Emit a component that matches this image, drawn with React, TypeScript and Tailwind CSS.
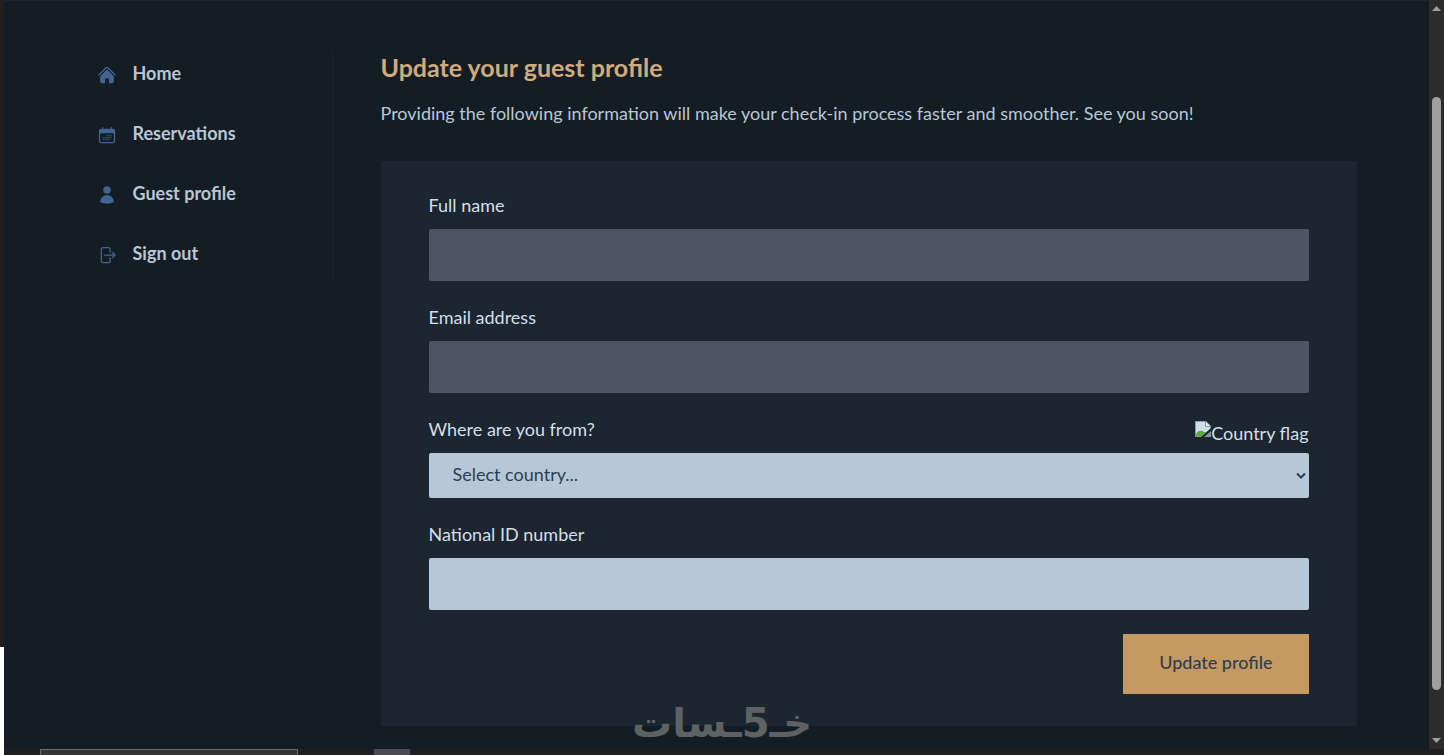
import { HiCalendarDays, HiHome, HiUser } from "react-icons/hi2";

interface NavLink {
  icon: React.ReactNode;
  title: string;
  href: string;
}

const navLinks: NavLink[] = [
  {
    icon: <HiHome size={20} />,
    title: "Home",
    href: "#home",
  },
  {
    icon: <HiCalendarDays size={20} />,
    title: "Reservations",
    href: "#reservations",
  },
  {
    icon: <HiUser size={20} />,
    title: "Guest profile",
    href: "#profile",
  },
];

function SignOutIcon() {
  return (
    <svg
      width="20"
      height="20"
      viewBox="0 0 24 24"
      fill="none"
      stroke="currentColor"
      strokeWidth="1.5"
      strokeLinecap="round"
      strokeLinejoin="round"
    >
      <path d="M15.75 9V5.25A2.25 2.25 0 0 0 13.5 3h-6a2.25 2.25 0 0 0-2.25 2.25v13.5A2.25 2.25 0 0 0 7.5 21h6a2.25 2.25 0 0 0 2.25-2.25V15m3 0 3-3m0 0-3-3m3 3H9" />
    </svg>
  );
}

function SideNavigation() {
  return (
    <nav className="w-64 shrink-0 self-start border-r border-[#1b2631]">
      <ul className="flex flex-col gap-2 text-lg font-bold text-[#b7c7d7]">
        {navLinks.map((link) => (
          <li key={link.title}>
            <a
              href={link.href}
              className="flex items-center gap-4 px-5 py-3 hover:bg-[#1b2631]"
            >
              <span className="text-[#416592]">{link.icon}</span>
              <span className="pb-1 leading-6">{link.title}</span>
            </a>
          </li>
        ))}
        <li>
          <button className="flex w-full items-center gap-4 px-5 py-3 hover:bg-[#1b2631]">
            <span className="text-[#416592]">
              <SignOutIcon />
            </span>
            <span className="pb-1 leading-6">Sign out</span>
          </button>
        </li>
      </ul>
    </nav>
  );
}

function MissingImage() {
  return (
    <svg width="16" height="16" viewBox="0 0 16 16" className="shrink-0">
      <path d="M0 0h11l5 5v11H0z" fill="#8f979c" />
      <path d="M1 1h9v5h5v2L7 15H1z" fill="#d3dfe6" />
      <path d="M11 1v4h4z" fill="#eef2f4" />
      <path d="M1 15v-2c2-4 6-4 8-2l2 0-4 4z" fill="#57ab3e" />
      <path d="M16 7v3l-7 6H6z" fill="#1b2631" />
    </svg>
  );
}

function ProfileForm() {
  return (
    <form className="flex flex-col gap-6 bg-[#1c2630] px-12 py-8 text-lg leading-6 text-[#d4dee7]">
      <div className="flex flex-col gap-3">
        <label htmlFor="fullName">Full name</label>
        <input
          id="fullName"
          disabled
          className="h-13 w-full rounded-xs bg-[#4b5563] px-5"
        />
      </div>

      <div className="flex flex-col gap-3">
        <label htmlFor="email">Email address</label>
        <input
          id="email"
          disabled
          className="h-13 w-full rounded-xs bg-[#4b5563] px-5"
        />
      </div>

      <div className="flex flex-col gap-3">
        <div className="flex items-end justify-between">
          <label htmlFor="nationality">Where are you from?</label>
          <span className="flex h-5">
            <MissingImage />
            Country flag
          </span>
        </div>
        <div className="relative">
          <select
            id="nationality"
            className="h-[45px] w-full appearance-none rounded-xs bg-[#b7c7d7] px-6 pb-1 text-[#2d3f51]"
          >
            <option>Select country...</option>
          </select>
          <svg
            width="10"
            height="8"
            viewBox="0 0 10 8"
            fill="none"
            stroke="#2d3f51"
            strokeWidth="2"
            className="pointer-events-none absolute top-[19px] right-[3px]"
          >
            <path d="M1 1.5l4 4 4-4" />
          </svg>
        </div>
      </div>

      <div className="flex flex-col gap-3">
        <label htmlFor="nationalID">National ID number</label>
        <input
          id="nationalID"
          className="h-13 w-full rounded-xs bg-[#b7c7d7] px-5 text-[#2d3f51]"
        />
      </div>

      <div className="flex justify-end">
        <button className="bg-[#c69963] px-9 pt-4 pb-5 font-medium text-[#2d3f51] hover:bg-[#b58a57]">
          Update profile
        </button>
      </div>
    </form>
  );
}

function ScrollBar() {
  return (
    <div className="flex w-[15px] shrink-0 flex-col items-center bg-[#2c2c2c] py-1.5">
      <svg width="9" height="5" viewBox="0 0 9 5" fill="#a0a0a0">
        <path d="M4.5 0L9 5H0z" />
      </svg>
      <div className="mt-[86px] mb-12 w-[9px] grow rounded-full bg-[#9f9f9f]" />
      <svg width="9" height="5" viewBox="0 0 9 5" fill="#a0a0a0">
        <path d="M4.5 5L0 0h9z" />
      </svg>
    </div>
  );
}

export default function App() {
  return (
    <div className="relative flex min-h-screen font-['Lato',sans-serif]">
      <div className="flex w-1 shrink-0 flex-col">
        <div className="grow bg-[#202020]" />
        <div className="h-[108px] bg-white" />
      </div>

      <div className="flex grow flex-col">
        <div className="flex grow">
          <div className="grow border-t border-[#1b2631] bg-[#151d24] pt-12">
            <div className="mx-auto flex max-w-7xl gap-12">
              <SideNavigation />
              <main className="grow">
                <h2 className="mb-4 text-[25px] leading-9 font-bold text-[#d0ab7c]">
                  Update your guest profile
                </h2>
                <p className="mb-9 text-lg leading-6 text-[#b7c7d7]">
                  Providing the following information will make your check-in
                  process faster and smoother. See you soon!
                </p>
                <ProfileForm />
              </main>
            </div>
          </div>
          <ScrollBar />
        </div>

        <div className="flex h-1.5 bg-[#1e1f22] pl-9">
          <div className="w-[258px] border-x border-t border-[#6b6d6d] bg-[#353436]" />
          <div className="ml-[76px] w-9 bg-[#4a4b53]" />
        </div>
      </div>

      <div
        dir="rtl"
        className="pointer-events-none absolute inset-x-0 bottom-0 text-center font-['DejaVu_Sans',sans-serif] text-[40px] leading-[64px] font-bold text-[#5d6264]"
      >
        خـ5ـسات
      </div>
    </div>
  );
}
